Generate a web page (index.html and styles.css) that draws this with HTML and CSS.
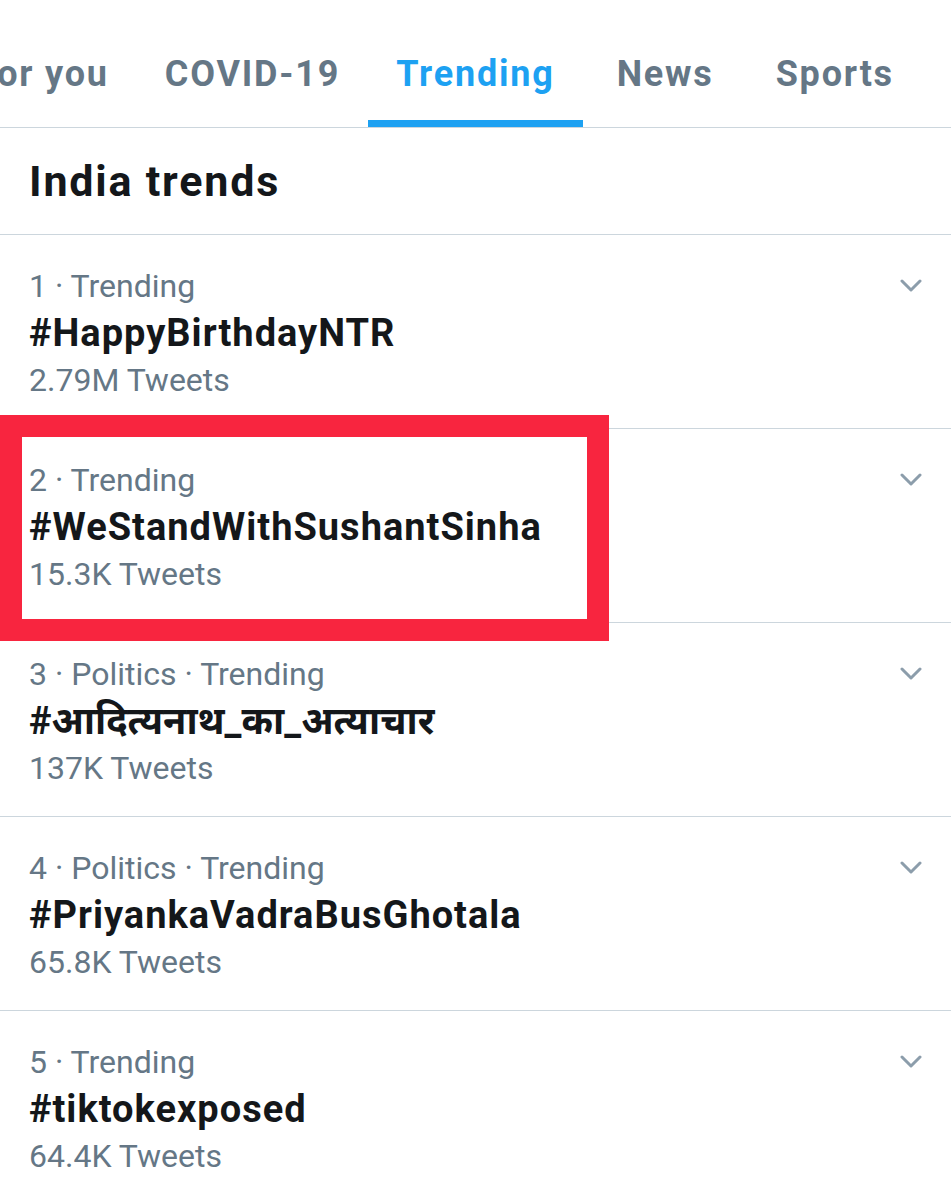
FILE: index.html
```html
<!DOCTYPE html>
<html lang="en">

<head>
  <meta charset="UTF-8">
  <meta name="viewport" content="width=device-width, initial-scale=1.0">
  <title>Trending</title>
  <link rel="stylesheet" href="styles.css">
</head>

<body>
  <nav class="tabs">
    <a class="tabs__item" href="#">For you</a>
    <a class="tabs__item" href="#">COVID-19</a>
    <a class="tabs__item tabs__item--active" href="#">Trending</a>
    <a class="tabs__item" href="#">News</a>
    <a class="tabs__item" href="#">Sports</a>
  </nav>

  <h2 class="heading">India trends</h2>

  <ul class="trends">
    <li class="trend">
      <div class="trend__body">
        <div class="trend__meta">1 · Trending</div>
        <div class="trend__title">#HappyBirthdayNTR</div>
        <div class="trend__count">2.79M Tweets</div>
      </div>
      <svg class="trend__more" viewBox="0 0 22 13"><path d="M2 2l9 9 9-9" /></svg>
    </li>
    <li class="trend">
      <div class="trend__body">
        <div class="trend__meta">2 · Trending</div>
        <div class="trend__title">#WeStandWithSushantSinha</div>
        <div class="trend__count">15.3K Tweets</div>
      </div>
      <svg class="trend__more" viewBox="0 0 22 13"><path d="M2 2l9 9 9-9" /></svg>
      <span class="mark"></span>
    </li>
    <li class="trend">
      <div class="trend__body">
        <div class="trend__meta">3 · Politics · Trending</div>
        <div class="trend__title trend__title--hi">#आदित्यनाथ_का_अत्याचार</div>
        <div class="trend__count">137K Tweets</div>
      </div>
      <svg class="trend__more" viewBox="0 0 22 13"><path d="M2 2l9 9 9-9" /></svg>
    </li>
    <li class="trend">
      <div class="trend__body">
        <div class="trend__meta">4 · Politics · Trending</div>
        <div class="trend__title">#PriyankaVadraBusGhotala</div>
        <div class="trend__count">65.8K Tweets</div>
      </div>
      <svg class="trend__more" viewBox="0 0 22 13"><path d="M2 2l9 9 9-9" /></svg>
    </li>
    <li class="trend">
      <div class="trend__body">
        <div class="trend__meta">5 · Trending</div>
        <div class="trend__title">#tiktokexposed</div>
        <div class="trend__count">64.4K Tweets</div>
      </div>
      <svg class="trend__more" viewBox="0 0 22 13"><path d="M2 2l9 9 9-9" /></svg>
    </li>
  </ul>
</body>

</html>
```

FILE: styles.css
```css
body {
  margin: 0;
  background: #fff;
  font-family: Roboto, "Noto Sans", sans-serif;
  color: #14171a;
  overflow: hidden;
}

/* tab bar */
.tabs {
  display: flex;
  height: 127px;
  border-bottom: 1px solid #ccd6dd;
  margin-left: -52px;
}

.tabs__item {
  position: relative;
  display: flex;
  align-items: center;
  padding: 20px 28px 0;
  font-size: 36px;
  font-weight: 700;
  letter-spacing: 1.8px;
  color: #657786;
  text-decoration: none;
  white-space: nowrap;
}

.tabs__item--active {
  color: #1da1f2;
}

.tabs__item--active ~ .tabs__item {
  margin-left: 6px;
}

.tabs__item--active::after {
  content: "";
  position: absolute;
  left: 0;
  right: 0;
  bottom: 0;
  height: 7px;
  background: #1da1f2;
}

/* heading */
.heading {
  margin: 0;
  height: 107px;
  padding: 0 29px;
  display: flex;
  align-items: center;
  font-size: 43px;
  font-weight: 700;
  letter-spacing: 1.8px;
  border-bottom: 1px solid #ccd6dd;
  box-sizing: border-box;
}

/* list */
.trends {
  list-style: none;
  margin: 0;
  padding: 0;
}

.trend {
  position: relative;
  display: flex;
  justify-content: space-between;
  align-items: flex-start;
  height: 194px;
  box-sizing: border-box;
  padding: 28px 29px 0 29px;
  border-bottom: 1px solid #ccd6dd;
}

.trend__body {
  line-height: 47px;
}

.trend__meta,
.trend__count {
  font-size: 32px;
  color: #657786;
}

.trend__title {
  font-size: 38px;
  font-weight: 700;
  letter-spacing: 1px;
  color: #14171a;
}

.trend__title--hi {
  letter-spacing: 0;
}

.trend__more {
  width: 22px;
  height: 13px;
  margin-top: 16px;
  fill: none;
  stroke: #8c9dab;
  stroke-width: 3;
  stroke-linecap: round;
  stroke-linejoin: round;
}

/* red annotation frame */
.mark {
  position: absolute;
  left: 0;
  top: -14px;
  width: 609px;
  height: 226px;
  box-sizing: border-box;
  border: 22px solid #f8253f;
}
```
